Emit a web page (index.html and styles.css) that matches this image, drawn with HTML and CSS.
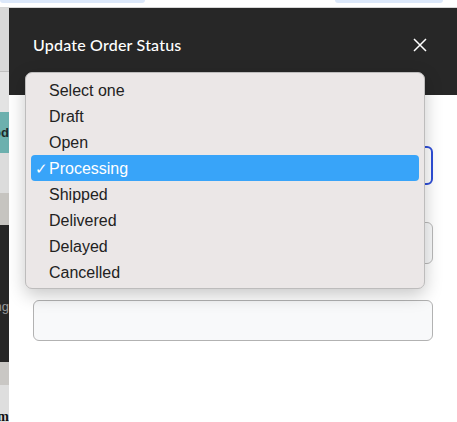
FILE: index.html
```html
<!DOCTYPE html>
<html>
<head>
<meta charset="utf-8">
<link rel="stylesheet" href="styles.css">
</head>
<body>
<div class="topbar">
  <div class="pill pill-left"></div>
  <div class="pill pill-right"></div>
</div>
<div class="main">
  <div class="backdrop">
    <div class="bd bd-1"></div>
    <div class="bd bd-2"></div>
    <div class="bd bd-teal"><span>Good</span></div>
    <div class="bd bd-3"></div>
    <div class="bd bd-4"></div>
    <div class="bd bd-dark"><span>Missing</span></div>
    <div class="bd bd-5"></div>
    <div class="bd bd-6"><span>Item</span></div>
  </div>
  <div class="panel">
    <div class="header">
      <div class="title">Update Order Status</div>
      <svg class="close" width="16" height="16" viewBox="0 0 16 16">
        <path d="M2 2 L14 14 M14 2 L2 14" stroke="#fff" stroke-width="1.5" fill="none"/>
      </svg>
    </div>
    <div class="body">
      <div class="field field-select"></div>
      <div class="field field-two"></div>
      <div class="field field-three"></div>
      <div class="menu">
        <div class="item">Select one</div>
        <div class="item">Draft</div>
        <div class="item">Open</div>
        <div class="item selected"><span class="check">✓</span>Processing</div>
        <div class="item">Shipped</div>
        <div class="item">Delivered</div>
        <div class="item">Delayed</div>
        <div class="item">Cancelled</div>
      </div>
    </div>
  </div>
</div>
</body>
</html>
```
FILE: styles.css
```css
html, body {
  margin: 0;
  padding: 0;
}
body {
  width: 457px;
  height: 422px;
  overflow: hidden;
  background: #ffffff;
  font-family: "Liberation Sans", Arial, sans-serif;
}
.topbar {
  height: 8px;
  display: flex;
  background: #ffffff;
  border-bottom: 1px solid #d6d6d6;
  box-sizing: border-box;
}
.pill {
  height: 3px;
  background: #dce8fa;
  border-radius: 0 0 10px 10px;
}
.pill-left {
  width: 145px;
}
.pill-right {
  width: 108px;
  margin-left: 190px;
}
.main {
  display: flex;
  height: 414px;
}
.backdrop {
  width: 9px;
  display: flex;
  flex-direction: column;
  flex-shrink: 0;
}
.bd {
  display: flex;
  justify-content: flex-end;
  align-items: center;
  overflow: hidden;
  white-space: nowrap;
  font-size: 13px;
}
.bd-1 { height: 63px; background: #d9d9d9; border-bottom: 1px solid #bfbfbf; }
.bd-2 { height: 40px; background: #e3e3e3; }
.bd-teal { height: 41px; background: #6cb0ae; color: #1e2a2a; font-weight: bold; }
.bd-3 { height: 40px; background: #dcdcdc; }
.bd-4 { height: 32px; background: #c6c4c0; }
.bd-dark { height: 137px; background: #262626; color: #9a9a9a; align-items: flex-start; padding-top: 74px; box-sizing: border-box; }
.bd-5 { height: 23px; background: #c9c7c4; }
.bd-6 { height: 37px; background: #dedede; align-items: flex-end; font-family: "Liberation Serif", serif; font-weight: bold; color: #111; font-size: 14px; line-height: 10px; }
.panel {
  flex: 1;
  display: flex;
  flex-direction: column;
  background: #ffffff;
}
.header {
  height: 87px;
  background: #272727;
  display: flex;
  align-items: flex-start;
  justify-content: space-between;
  padding: 28px 29px 0 24px;
  box-sizing: border-box;
}
.title {
  color: #ffffff;
  font-family: Lato, "Open Sans", sans-serif;
  font-size: 16px;
  font-weight: 500;
  letter-spacing: 0.2px;
  line-height: 18px;
}
.close {
  margin-top: 1px;
}
.body {
  position: relative;
  flex: 1;
  padding: 51px 24px 0 24px;
  display: flex;
  flex-direction: column;
}
.field {
  height: 39px;
  border-radius: 6px;
  box-sizing: border-box;
}
.field-select {
  border: 2px solid #2f4fd8;
}
.field-two {
  margin-top: 37px;
  height: 42px;
  border: 1px solid #b9b9b9;
  background: #f8f9fa;
}
.field-three {
  margin-top: 36px;
  height: 41px;
  border: 1px solid #b2b2b2;
  background: #f8f9fa;
}
.menu {
  position: absolute;
  left: 16px;
  top: -23px;
  width: 400px;
  height: 217px;
  box-sizing: border-box;
  padding: 4px 5px 5px 5px;
  background: #ebe7e7;
  border: 1px solid #bdbcbc;
  border-radius: 7px;
  box-shadow: 0 6px 18px rgba(0, 0, 0, 0.22);
}
.item {
  height: 26px;
  line-height: 27px;
  padding-left: 18px;
  font-size: 16px;
  color: #222222;
  border-radius: 4px;
  position: relative;
}
.item.selected {
  background: #38a4f9;
  color: #ffffff;
}
.check {
  position: absolute;
  left: 4px;
  top: 0;
  font-size: 15px;
}
```
